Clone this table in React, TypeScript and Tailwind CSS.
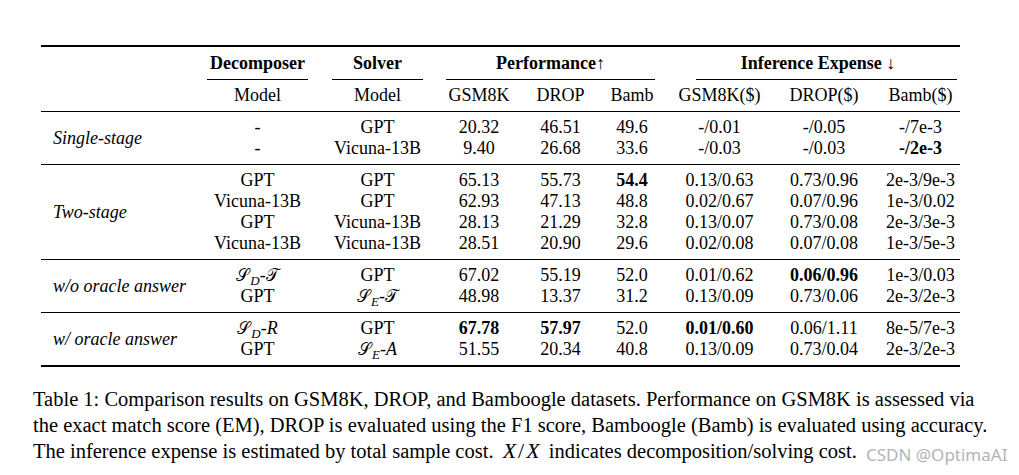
import React from "react";

const COLS = "grid grid-cols-[156px_121px_119px_84px_79px_64px_111px_98px_87px]";

type Cell = React.ReactNode;

function B({ children }: { children: React.ReactNode }) {
  return <span className="font-bold">{children}</span>;
}

function Cal({ c, sub, rest }: { c: string; sub: string; rest: React.ReactNode }) {
  return (
    <span className="inline-flex items-baseline">
      <span className="font-['DejaVu_Serif',serif] text-[17px]">{c}</span>
      <span className="italic text-[13px] relative top-[4px] ml-[1px]">{sub}</span>
      <span>-</span>
      {rest}
    </span>
  );
}

function Row({ cells }: { cells: Cell[] }) {
  return (
    <>
      {cells.map((c, i) => (
        <div
          key={i}
          className={
            "h-[21px] leading-[21px] text-center whitespace-nowrap" + (i === 7 ? " pl-[8px]" : "")
          }
        >
          {c}
        </div>
      ))}
    </>
  );
}

function Group({ label, rows }: { label: string; rows: Cell[][] }) {
  const span = rows.length === 2 ? "row-span-2" : "row-span-4";
  return (
    <div className={COLS + " py-[5px]"}>
      <div className={span + " flex items-center pl-[12px] italic"}>{label}</div>
      {rows.map((r, i) => (
        <Row key={i} cells={r} />
      ))}
    </div>
  );
}

export default function App() {
  const calT = <span className="font-['DejaVu_Serif',serif] text-[17px]">𝒯</span>;
  return (
    <div className="relative w-[1019px] h-[475px] bg-white text-black font-['Liberation_Serif',serif] text-[18px] overflow-hidden">
      <div className="ml-[41px] mt-[45px] w-[919px]">
        <div className="h-[2px] bg-black" />
        {/* header row 1 */}
        <div className={COLS}>
          <div />
          <div className="flex flex-col">
            <div className="h-[32px] leading-[32px] text-center font-bold">Decomposer</div>
            <div className="h-[1px] bg-black mx-[10px]" />
          </div>
          <div className="flex flex-col">
            <div className="h-[32px] leading-[32px] text-center font-bold">Solver</div>
            <div className="h-[1px] bg-black mx-[14px]" />
          </div>
          <div className="col-span-3 flex flex-col">
            <div className="h-[32px] leading-[32px] text-center font-bold">Performance↑</div>
            <div className="h-[1px] bg-black mx-[9px]" />
          </div>
          <div className="col-span-3 flex flex-col">
            <div className="h-[32px] leading-[32px] text-center font-bold pl-[12px]">Inference Expense ↓</div>
            <div className="h-[1px] bg-black ml-[32px] mr-[3px]" />
          </div>
        </div>
        {/* header row 2 */}
        <div className={COLS}>
          <div />
          {["Model", "Model", "GSM8K", "DROP", "Bamb", "GSM8K($)", "DROP($)", "Bamb($)"].map((t, i) => (
            <div key={i} className={"h-[31px] leading-[31px] text-center" + (i === 7 ? " pl-[8px]" : "")}>
              {t}
            </div>
          ))}
        </div>
        <div className="h-[1px] bg-black" />
        <Group
          label="Single-stage"
          rows={[
            ["-", "GPT", "20.32", "46.51", "49.6", "-/0.01", "-/0.05", "-/7e-3"],
            ["-", "Vicuna-13B", "9.40", "26.68", "33.6", "-/0.03", "-/0.03", <B>-/2e-3</B>],
          ]}
        />
        <div className="h-[1px] bg-black" />
        <Group
          label="Two-stage"
          rows={[
            ["GPT", "GPT", "65.13", "55.73", <B>54.4</B>, "0.13/0.63", "0.73/0.96", "2e-3/9e-3"],
            ["Vicuna-13B", "GPT", "62.93", "47.13", "48.8", "0.02/0.67", "0.07/0.96", "1e-3/0.02"],
            ["GPT", "Vicuna-13B", "28.13", "21.29", "32.8", "0.13/0.07", "0.73/0.08", "2e-3/3e-3"],
            ["Vicuna-13B", "Vicuna-13B", "28.51", "20.90", "29.6", "0.02/0.08", "0.07/0.08", "1e-3/5e-3"],
          ]}
        />
        <div className="h-[1px] bg-black" />
        <Group
          label="w/o oracle answer"
          rows={[
            [<Cal c="𝒮" sub="D" rest={calT} />, "GPT", "67.02", "55.19", "52.0", "0.01/0.62", <B>0.06/0.96</B>, "1e-3/0.03"],
            ["GPT", <Cal c="𝒮" sub="E" rest={calT} />, "48.98", "13.37", "31.2", "0.13/0.09", "0.73/0.06", "2e-3/2e-3"],
          ]}
        />
        <div className="h-[1px] bg-black" />
        <Group
          label="w/ oracle answer"
          rows={[
            [<Cal c="𝒮" sub="D" rest={<span className="italic">R</span>} />, "GPT", <B>67.78</B>, <B>57.97</B>, "52.0", <B>0.01/0.60</B>, "0.06/1.11", "8e-5/7e-3"],
            ["GPT", <Cal c="𝒮" sub="E" rest={<span className="italic">A</span>} />, "51.55", "20.34", "40.8", "0.13/0.09", "0.73/0.04", "2e-3/2e-3"],
          ]}
        />
        <div className="h-[2px] bg-black" />
      </div>
      <div className="ml-[33px] mt-[19px] leading-[26px] text-[20.5px] whitespace-nowrap">
        <div>Table 1: Comparison results on GSM8K, DROP, and Bamboogle datasets. Performance on GSM8K is assessed via</div>
        <div>the exact match score (EM), DROP is evaluated using the F1 score, Bamboogle (Bamb) is evaluated using accuracy.</div>
        <div>
          The inference expense is estimated by total sample cost.{" "}
          <span className="ml-[4px] mr-[4px] text-[22px]">
            <span className="italic">X</span>
            <span className="px-[2px]">/</span>
            <span className="italic">X</span>
          </span>{" "}
          indicates decomposition/solving cost.
        </div>
      </div>
      <div className="absolute left-[866px] top-[445px] text-[17px] leading-[20px] text-[#b4b4b4] font-['Noto_Sans',sans-serif]">
        CSDN @OptimaAI
      </div>
    </div>
  );
}
